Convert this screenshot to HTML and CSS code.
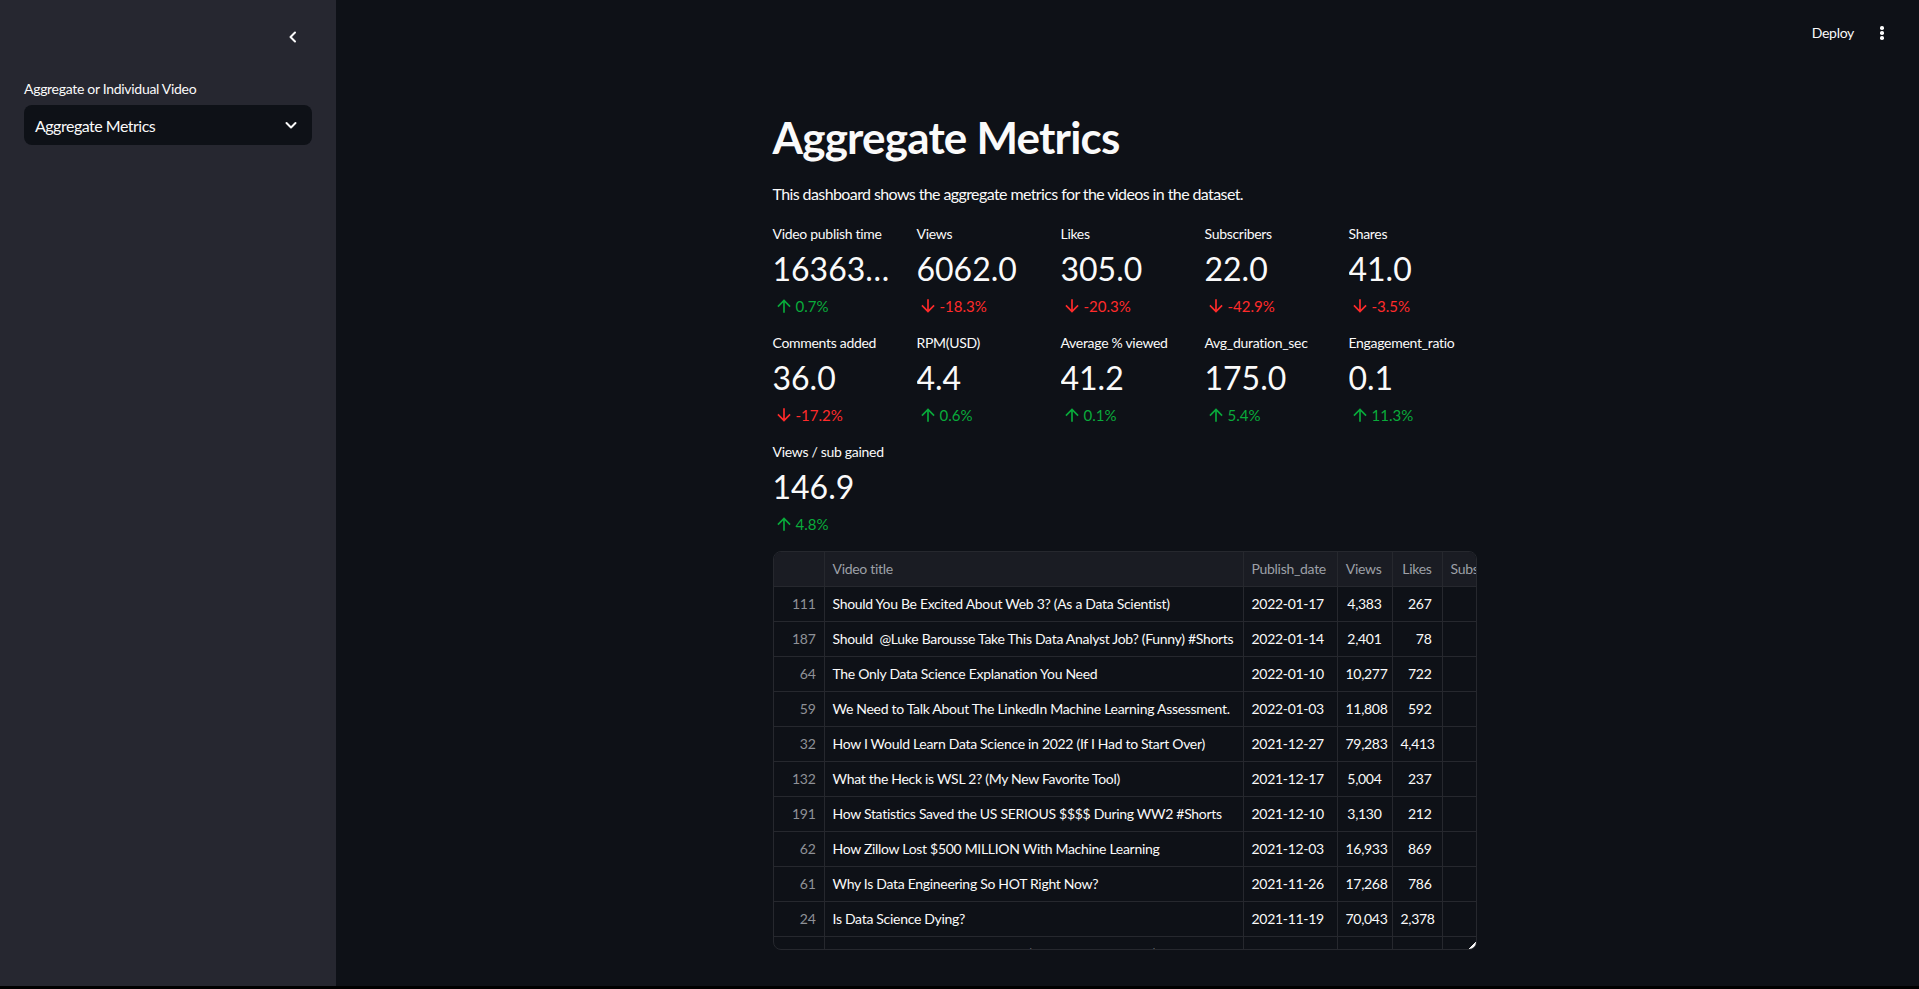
FILE: index.html
```html
<!DOCTYPE html>
<html lang="en">
<head>
<meta charset="utf-8">
<title>Aggregate Metrics</title>
<link rel="stylesheet" href="styles.css">
</head>
<body>
<div class="app">
  <aside class="sidebar">
    <div class="sb-top">
      <button class="collapse" aria-label="Collapse sidebar">
        <svg width="16" height="16" viewBox="0 0 16 16"><path d="M10 3.5 5.5 8 10 12.5" fill="none" stroke="#fafafa" stroke-width="2" stroke-linecap="round" stroke-linejoin="round"/></svg>
      </button>
    </div>
    <div class="sb-content">
      <div class="sb-label">Aggregate or Individual Video</div>
      <div class="select">
        <span>Aggregate Metrics</span>
        <svg width="16" height="16" viewBox="0 0 16 16"><path d="M3.5 6 8 10.5 12.5 6" fill="none" stroke="#fafafa" stroke-width="2" stroke-linecap="round" stroke-linejoin="round"/></svg>
      </div>
    </div>
  </aside>
  <main class="main">
    <header class="topbar">
      <span class="deploy">Deploy</span>
      <span class="kebab"><i></i><i></i><i></i></span>
    </header>
    <div class="block">
      <h1 class="title">Aggregate Metrics</h1>
      <p class="desc">This dashboard shows the aggregate metrics for the videos in the dataset.</p>
      <div class="metrics">
        <div class="metric"><div class="m-label">Video publish time</div><div class="m-value">1636329600000.0</div><div class="m-delta up"><svg viewBox="0 0 24 24"><path d="M4 12l1.41 1.41L11 7.83V20h2V7.83l5.58 5.59L20 12l-8-8-8 8z"/></svg><span>0.7%</span></div></div>
        <div class="metric"><div class="m-label">Views</div><div class="m-value">6062.0</div><div class="m-delta down"><svg viewBox="0 0 24 24"><path d="M20 12l-1.41-1.41L13 16.17V4h-2v12.17l-5.58-5.59L4 12l8 8 8-8z"/></svg><span>-18.3%</span></div></div>
        <div class="metric"><div class="m-label">Likes</div><div class="m-value">305.0</div><div class="m-delta down"><svg viewBox="0 0 24 24"><path d="M20 12l-1.41-1.41L13 16.17V4h-2v12.17l-5.58-5.59L4 12l8 8 8-8z"/></svg><span>-20.3%</span></div></div>
        <div class="metric"><div class="m-label">Subscribers</div><div class="m-value">22.0</div><div class="m-delta down"><svg viewBox="0 0 24 24"><path d="M20 12l-1.41-1.41L13 16.17V4h-2v12.17l-5.58-5.59L4 12l8 8 8-8z"/></svg><span>-42.9%</span></div></div>
        <div class="metric"><div class="m-label">Shares</div><div class="m-value">41.0</div><div class="m-delta down"><svg viewBox="0 0 24 24"><path d="M20 12l-1.41-1.41L13 16.17V4h-2v12.17l-5.58-5.59L4 12l8 8 8-8z"/></svg><span>-3.5%</span></div></div>

        <div class="metric"><div class="m-label">Comments added</div><div class="m-value">36.0</div><div class="m-delta down"><svg viewBox="0 0 24 24"><path d="M20 12l-1.41-1.41L13 16.17V4h-2v12.17l-5.58-5.59L4 12l8 8 8-8z"/></svg><span>-17.2%</span></div></div>
        <div class="metric"><div class="m-label">RPM(USD)</div><div class="m-value">4.4</div><div class="m-delta up"><svg viewBox="0 0 24 24"><path d="M4 12l1.41 1.41L11 7.83V20h2V7.83l5.58 5.59L20 12l-8-8-8 8z"/></svg><span>0.6%</span></div></div>
        <div class="metric"><div class="m-label">Average % viewed</div><div class="m-value">41.2</div><div class="m-delta up"><svg viewBox="0 0 24 24"><path d="M4 12l1.41 1.41L11 7.83V20h2V7.83l5.58 5.59L20 12l-8-8-8 8z"/></svg><span>0.1%</span></div></div>
        <div class="metric"><div class="m-label">Avg_duration_sec</div><div class="m-value">175.0</div><div class="m-delta up"><svg viewBox="0 0 24 24"><path d="M4 12l1.41 1.41L11 7.83V20h2V7.83l5.58 5.59L20 12l-8-8-8 8z"/></svg><span>5.4%</span></div></div>
        <div class="metric"><div class="m-label">Engagement_ratio</div><div class="m-value">0.1</div><div class="m-delta up"><svg viewBox="0 0 24 24"><path d="M4 12l1.41 1.41L11 7.83V20h2V7.83l5.58 5.59L20 12l-8-8-8 8z"/></svg><span>11.3%</span></div></div>

        <div class="metric"><div class="m-label">Views / sub gained</div><div class="m-value">146.9</div><div class="m-delta up"><svg viewBox="0 0 24 24"><path d="M4 12l1.41 1.41L11 7.83V20h2V7.83l5.58 5.59L20 12l-8-8-8 8z"/></svg><span>4.8%</span></div></div>
      </div>

      <div class="grid-wrap">
        <table class="grid">
          <colgroup>
            <col class="c-idx"><col class="c-title"><col class="c-date"><col class="c-views"><col class="c-likes"><col class="c-subs">
          </colgroup>
          <thead>
            <tr><th></th><th>Video title</th><th>Publish_date</th><th class="num">Views</th><th class="num">Likes</th><th>Subscribers</th></tr>
          </thead>
          <tbody>
            <tr><td class="idx">111</td><td>Should You Be Excited About Web 3? (As a Data Scientist)</td><td>2022-01-17</td><td class="num">4,383</td><td class="num">267</td><td></td></tr>
            <tr><td class="idx">187</td><td>Should&nbsp; @Luke Barousse Take This Data Analyst Job? (Funny) #Shorts</td><td>2022-01-14</td><td class="num">2,401</td><td class="num">78</td><td></td></tr>
            <tr><td class="idx">64</td><td>The Only Data Science Explanation You Need</td><td>2022-01-10</td><td class="num">10,277</td><td class="num">722</td><td></td></tr>
            <tr><td class="idx">59</td><td>We Need to Talk About The LinkedIn Machine Learning Assessment.</td><td>2022-01-03</td><td class="num">11,808</td><td class="num">592</td><td></td></tr>
            <tr><td class="idx">32</td><td>How I Would Learn Data Science in 2022 (If I Had to Start Over)</td><td>2021-12-27</td><td class="num">79,283</td><td class="num">4,413</td><td></td></tr>
            <tr><td class="idx">132</td><td>What the Heck is WSL 2? (My New Favorite Tool)</td><td>2021-12-17</td><td class="num">5,004</td><td class="num">237</td><td></td></tr>
            <tr><td class="idx">191</td><td>How Statistics Saved the US SERIOUS $$$$ During WW2 #Shorts</td><td>2021-12-10</td><td class="num">3,130</td><td class="num">212</td><td></td></tr>
            <tr><td class="idx">62</td><td>How Zillow Lost $500 MILLION With Machine Learning</td><td>2021-12-03</td><td class="num">16,933</td><td class="num">869</td><td></td></tr>
            <tr><td class="idx">61</td><td>Why Is Data Engineering So HOT Right Now?</td><td>2021-11-26</td><td class="num">17,268</td><td class="num">786</td><td></td></tr>
            <tr><td class="idx">24</td><td>Is Data Science Dying?</td><td>2021-11-19</td><td class="num">70,043</td><td class="num">2,378</td><td></td></tr>
            <tr><td class="idx">15</td><td>How I Would Learn Data Science (If I Had to Start Over)</td><td>2021-11-12</td><td class="num">42,105</td><td class="num">1,984</td><td></td></tr>
          </tbody>
        </table>
        <span class="resize"></span>
      </div>
    </div>
  </main>
</div>
</body>
</html>
```
FILE: styles.css
```css
* { box-sizing: border-box; }

html, body {
  margin: 0;
  padding: 0;
}

body {
  background: #000;
  font-family: Lato, "Noto Sans", sans-serif;
  color: #fafafa;
  overflow: hidden;
}

.app {
  display: flex;
  height: 986px;
}

/* ---------- sidebar ---------- */
.sidebar {
  width: 336px;
  flex: none;
  background: #262730;
}

.sb-top {
  height: 74px;
  display: flex;
  align-items: center;
  justify-content: flex-end;
  padding-right: 35px;
}

.collapse {
  background: none;
  border: 0;
  padding: 0;
  width: 16px;
  height: 16px;
  display: flex;
}

.sb-content {
  padding: 3px 24px 0;
}

.sb-label {
  font-size: 14px;
  line-height: 24px;
  height: 24px;
  letter-spacing: -0.3px;
}

.select {
  margin-top: 4px;
  height: 40px;
  border-radius: 8px;
  background: #0e1117;
  display: flex;
  align-items: center;
  justify-content: space-between;
  padding: 0 13px 0 11px;
  font-size: 16px;
  letter-spacing: -0.5px;
}

/* ---------- main ---------- */
.main {
  flex: 1;
  background: #0e1117;
  padding-right: 6px;
  display: flex;
  flex-direction: column;
  overflow: hidden;
}

.topbar {
  height: 60px;
  flex: none;
  display: flex;
  align-items: center;
  justify-content: flex-end;
  padding-top: 6px;
  padding-right: 29px;
  gap: 26px;
}

.deploy {
  font-size: 14px;
  line-height: 20px;
  letter-spacing: -0.3px;
}

.kebab {
  display: flex;
  flex-direction: column;
  gap: 1.5px;
  width: 4px;
}

.kebab i {
  display: block;
  width: 3.5px;
  height: 3.5px;
  border-radius: 50%;
  background: #fafafa;
}

.block {
  width: 704px;
  margin: 0 auto;
  padding-top: 51px;
}

.title {
  margin: 0;
  font-size: 44px;
  line-height: 52.8px;
  font-weight: 700;
  letter-spacing: -0.8px;
}

.desc {
  margin: 17px 0 0;
  font-size: 16px;
  line-height: 25.6px;
  letter-spacing: -0.6px;
}

.metrics {
  margin-top: 16px;
  display: grid;
  grid-template-columns: repeat(5, 1fr);
  column-gap: 16px;
  row-gap: 13.4px;
}

.metric {
  min-width: 0;
}

.m-label {
  font-size: 14px;
  line-height: 24px;
  height: 24px;
  margin-bottom: 3px;
  white-space: nowrap;
  letter-spacing: -0.3px;
}

.m-value {
  font-size: 32px;
  line-height: 40px;
  white-space: nowrap;
  overflow: hidden;
  text-overflow: ellipsis;
  margin-bottom: 4.6px;
}

.m-delta {
  display: flex;
  align-items: center;
  font-size: 15px;
  line-height: 24px;
  height: 24px;
  gap: 2px;
}

.m-delta svg {
  width: 20px;
  height: 20px;
  margin-left: 1px;
  flex: none;
}

.m-delta.up { color: #09ab3b; }
.m-delta.up svg { fill: #09ab3b; }
.m-delta.down { color: #ff2b2b; }
.m-delta.down svg { fill: #ff2b2b; }

/* ---------- data grid ---------- */
.grid-wrap {
  position: relative;
  margin-top: 15px;
  height: 399px;
  border: 1px solid #26282e;
  border-radius: 8px;
  overflow: hidden;
  background: #0e1117;
}

.grid {
  border-collapse: separate;
  border-spacing: 0;
  table-layout: fixed;
  width: 769px;
  font-size: 14px;
  letter-spacing: -0.3px;
}

.c-idx { width: 51px; }
.c-title { width: 419px; }
.c-date { width: 94px; }
.c-views { width: 55px; }
.c-likes { width: 50px; }
.c-subs { width: 100px; }

.grid th,
.grid td {
  padding: 0 8px;
  line-height: 34px;
  border-right: 1px solid #26282e;
  border-bottom: 1px solid #26282e;
  white-space: nowrap;
  overflow: hidden;
  text-align: left;
  font-weight: 400;
}

.grid th {
  background: #1a1c23;
  color: #9da0a7;
}

.grid td {
  color: #fafafa;
}

.grid td.idx {
  text-align: right;
  color: #8f9197;
}

.grid .num {
  text-align: right;
  padding-right: 10px;
}

.resize {
  position: absolute;
  right: 0;
  bottom: 0;
  width: 7px;
  height: 7px;
  background: linear-gradient(135deg, transparent 50%, #fafafa 50%);
}
```
